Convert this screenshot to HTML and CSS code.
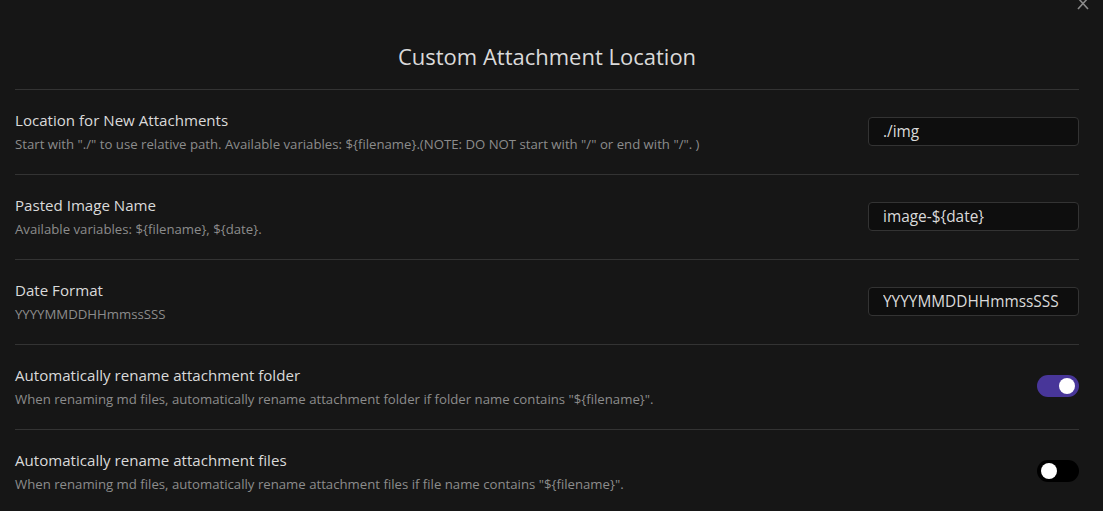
FILE: index.html
```html
<!DOCTYPE html>
<html>
<head>
<meta charset="utf-8">
<link rel="stylesheet" href="styles.css">
</head>
<body>
<div class="modal">
  <svg class="close" width="14" height="14" viewBox="0 0 14 14"><path d="M2 -2 L12 9 M12 -2 L2 9" stroke="#8a8a8a" stroke-width="1.6" fill="none"/></svg>
  <h2 class="title">Custom Attachment Location</h2>
  <div class="settings">
    <div class="item">
      <div class="info">
        <div class="name">Location for New Attachments</div>
        <div class="desc">Start with "./" to use relative path. Available variables: ${filename}.(NOTE: DO NOT start with "/" or end with "/". )</div>
      </div>
      <input class="text" type="text" value="./img">
    </div>
    <div class="item">
      <div class="info">
        <div class="name">Pasted Image Name</div>
        <div class="desc">Available variables: ${filename}, ${date}.</div>
      </div>
      <input class="text" type="text" value="image-${date}">
    </div>
    <div class="item">
      <div class="info">
        <div class="name">Date Format</div>
        <div class="desc">YYYYMMDDHHmmssSSS</div>
      </div>
      <input class="text" type="text" value="YYYYMMDDHHmmssSSS">
    </div>
    <div class="item">
      <div class="info">
        <div class="name">Automatically rename attachment folder</div>
        <div class="desc">When renaming md files, automatically rename attachment folder if folder name contains "${filename}".</div>
      </div>
      <div class="toggle on"><span class="knob"></span></div>
    </div>
    <div class="item">
      <div class="info">
        <div class="name">Automatically rename attachment files</div>
        <div class="desc">When renaming md files, automatically rename attachment files if file name contains "${filename}".</div>
      </div>
      <div class="toggle"><span class="knob"></span></div>
    </div>
  </div>
</div>
</body>
</html>
```
FILE: styles.css
```css
html, body {
  margin: 0;
  padding: 0;
  background: #161616;
  height: 100%;
  overflow: hidden;
}
.modal {
  position: relative;
  font-family: "Open Sans", "Noto Sans", sans-serif;
  color: #dadada;
  padding: 0 24px 0 15px;
}
.close {
  position: absolute;
  top: 0;
  right: 13px;
}
.title {
  margin: 0;
  height: 90px;
  box-sizing: border-box;
  padding-top: 41px;
  text-align: center;
  font-size: 22px;
  line-height: 30px;
  font-weight: 400;
  color: #dadada;
  border-bottom: 1px solid #333333;
}
.item {
  display: flex;
  align-items: center;
  justify-content: space-between;
  height: 85px;
  box-sizing: border-box;
  padding-bottom: 2px;
  border-bottom: 1px solid #333333;
}
.info {
  display: flex;
  flex-direction: column;
  gap: 5px;
}
.name {
  font-size: 15.1px;
  line-height: 20px;
  color: #dadada;
}
.desc {
  font-size: 13.2px;
  line-height: 18px;
  color: #8c8c8c;
}
.text {
  width: 211px;
  height: 29px;
  box-sizing: border-box;
  background: #0e0e0e;
  border: 1px solid #333333;
  border-radius: 4px;
  color: #dadada;
  font-family: "Open Sans", "Noto Sans", sans-serif;
  font-size: 15.4px;
  padding: 0 0 0 14px;
  outline: none;
}
.toggle {
  width: 42px;
  height: 22px;
  border-radius: 11px;
  background: #000000;
  position: relative;
  flex: none;
}
.toggle.on {
  background: #483699;
}
.knob {
  position: absolute;
  top: 3px;
  left: 4px;
  width: 16px;
  height: 16px;
  border-radius: 50%;
  background: #ffffff;
}
.toggle.on .knob {
  left: 22px;
}
```
